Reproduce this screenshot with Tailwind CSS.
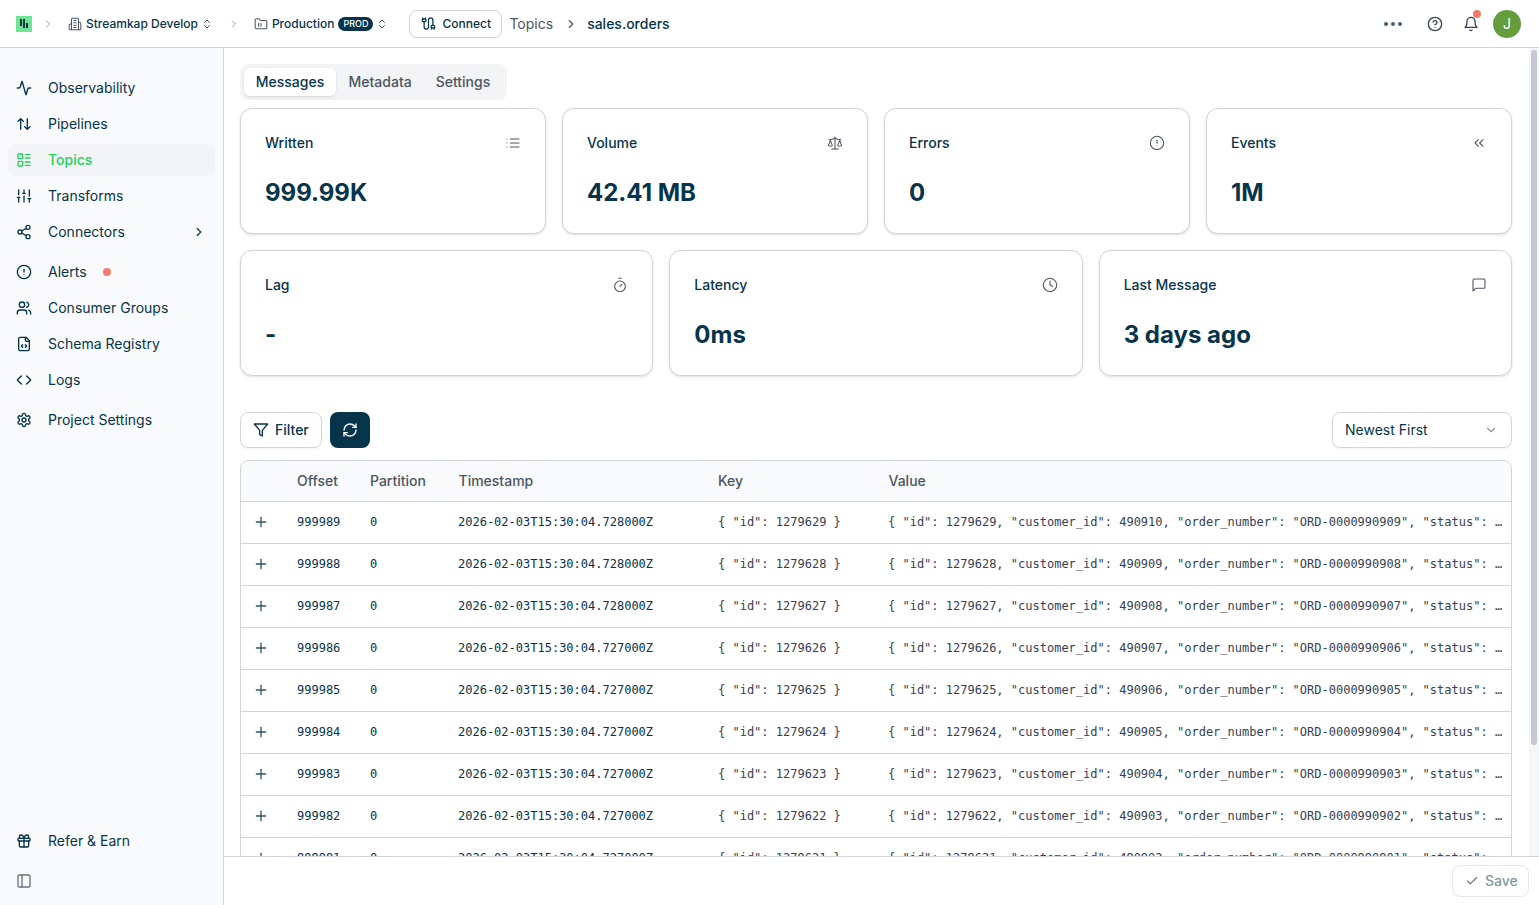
<!DOCTYPE html>
<html lang="en">
<head>
    <meta charset="UTF-8">
    <title>sales.orders</title>
    <script src="https://cdn.jsdelivr.net/npm/@tailwindcss/browser@4"></script>
</head>
<body class="h-[905px] w-[1539px] overflow-hidden bg-white font-['Inter',sans-serif] text-[#06344a]">
    <!-- Top bar -->
    <header class="flex h-[48px] items-center border-b border-[#d1d5db] pl-4 pr-[18px]">
        <div class="flex h-4 w-4 items-center justify-center gap-[1px] bg-[#6fe397]">
            <span class="h-[7px] w-[2px] -translate-y-[1px] bg-[#14343f]"></span>
            <span class="h-[9px] w-[2px] bg-[#14343f]"></span>
            <span class="h-[5px] w-[2px] translate-y-[2px] bg-[#14343f]"></span>
        </div>
        <svg class="ml-[10px] h-[12px] w-[12px] text-[#9ca3af]" viewBox="0 0 24 24" fill="none" stroke="currentColor" stroke-width="2" stroke-linecap="round" stroke-linejoin="round"><path d="m9 18 6-6-6-6"/></svg>
        <svg class="ml-[14px] h-[14px] w-[14px] text-[#4b5563]" viewBox="0 0 24 24" fill="none" stroke="currentColor" stroke-width="1.8" stroke-linecap="round" stroke-linejoin="round"><path d="M6 22V4a2 2 0 0 1 2-2h8a2 2 0 0 1 2 2v18Z"/><path d="M6 12H4a2 2 0 0 0-2 2v6a2 2 0 0 0 2 2h2"/><path d="M18 9h2a2 2 0 0 1 2 2v9a2 2 0 0 1-2 2h-2"/><path d="M10 6h4"/><path d="M10 10h4"/><path d="M10 14h4"/><path d="M10 18h4"/></svg>
        <span class="ml-1 text-xs font-medium">Streamkap Develop</span>
        <svg class="ml-[3px] h-3 w-3 text-[#4b5563]" viewBox="0 0 24 24" fill="none" stroke="currentColor" stroke-width="2" stroke-linecap="round" stroke-linejoin="round"><path d="m7 15 5 5 5-5"/><path d="m7 9 5-5 5 5"/></svg>
        <svg class="ml-[15px] h-[12px] w-[12px] text-[#9ca3af]" viewBox="0 0 24 24" fill="none" stroke="currentColor" stroke-width="2" stroke-linecap="round" stroke-linejoin="round"><path d="m9 18 6-6-6-6"/></svg>
        <svg class="ml-[14px] h-[14px] w-[14px] text-[#4b5563]" viewBox="0 0 24 24" fill="none" stroke="currentColor" stroke-width="1.8" stroke-linecap="round" stroke-linejoin="round"><path d="M20 20a2 2 0 0 0 2-2V8a2 2 0 0 0-2-2h-7.9a2 2 0 0 1-1.69-.9L9.6 3.9A2 2 0 0 0 7.93 3H4a2 2 0 0 0-2 2v13a2 2 0 0 0 2 2Z"/><path d="M8 11v5"/><path d="M12 11v5"/></svg>
        <span class="ml-1 text-xs font-medium">Production</span>
        <span class="ml-1 flex h-[14px] w-[35px] items-center justify-center rounded-full bg-[#06344a] text-[9px] font-medium text-white">PROD</span>
        <svg class="ml-[3px] h-3 w-3 text-[#4b5563]" viewBox="0 0 24 24" fill="none" stroke="currentColor" stroke-width="2" stroke-linecap="round" stroke-linejoin="round"><path d="m7 15 5 5 5-5"/><path d="m7 9 5-5 5 5"/></svg>
        <button class="ml-[21px] flex h-[28px] w-[93px] items-center gap-[6px] rounded-lg border border-[#d1d5db] pl-[11px] text-xs font-medium shadow-xs">
            <svg class="h-[15px] w-[15px]" viewBox="0 0 24 24" fill="none" stroke="currentColor" stroke-width="2" stroke-linecap="round" stroke-linejoin="round"><path d="M17 21v-2a1 1 0 0 1-1-1v-1a2 2 0 0 1 2-2h2a2 2 0 0 1 2 2v1a1 1 0 0 1-1 1"/><path d="M19 15V6.5a1 1 0 0 0-7 0v11a1 1 0 0 1-7 0V9"/><path d="M21 21v-2h-4"/><path d="M3 5h4V3"/><path d="M7 5a1 1 0 0 1 1 1v1a2 2 0 0 1-2 2H4a2 2 0 0 1-2-2V6a1 1 0 0 1 1-1V3"/></svg>
            Connect
        </button>
        <span class="ml-[7px] text-sm text-[#4b5563]">Topics</span>
        <svg class="ml-[11px] h-[14px] w-[14px] text-[#4b5563]" viewBox="0 0 24 24" fill="none" stroke="currentColor" stroke-width="2" stroke-linecap="round" stroke-linejoin="round"><path d="m9 18 6-6-6-6"/></svg>
        <span class="ml-[9px] text-sm font-medium">sales.orders</span>

        <div class="ml-auto flex items-center">
            <div class="flex gap-[3px]">
                <span class="h-[4px] w-[4px] rounded-full bg-[#3f6273]"></span>
                <span class="h-[4px] w-[4px] rounded-full bg-[#3f6273]"></span>
                <span class="h-[4px] w-[4px] rounded-full bg-[#3f6273]"></span>
            </div>
            <svg class="ml-[25px] h-4 w-4 text-[#374151]" viewBox="0 0 24 24" fill="none" stroke="currentColor" stroke-width="2" stroke-linecap="round" stroke-linejoin="round"><circle cx="12" cy="12" r="10"/><path d="M9.09 9a3 3 0 0 1 5.83 1c0 2-3 3-3 3"/><path d="M12 17h.01"/></svg>
            <div class="relative ml-[20px] h-4 w-4">
                <svg class="h-4 w-4 text-[#374151]" viewBox="0 0 24 24" fill="none" stroke="currentColor" stroke-width="2" stroke-linecap="round" stroke-linejoin="round"><path d="M6 8a6 6 0 0 1 12 0c0 7 3 9 3 9H3s3-2 3-9"/><path d="M10.3 21a1.94 1.94 0 0 0 3.4 0"/></svg>
                <span class="absolute -right-[2px] -top-[6px] h-2 w-2 rounded-full bg-[#ef7c6c]"></span>
            </div>
            <div class="ml-[14px] flex h-7 w-7 items-center justify-center rounded-full bg-[#659c3c] text-sm text-white">J</div>
        </div>
    </header>

    <div class="flex h-[857px]">
        <!-- Sidebar -->
        <aside class="flex w-[224px] shrink-0 flex-col border-r border-[#d1d5db] bg-[#f9fafb] px-2 pb-2 pt-6 text-sm">
            <nav class="flex flex-col gap-2">
                <div class="flex flex-col gap-1">
                    <a class="flex h-8 items-center gap-4 rounded-lg px-2">
                        <svg class="h-4 w-4" viewBox="0 0 24 24" fill="none" stroke="currentColor" stroke-width="2" stroke-linecap="round" stroke-linejoin="round"><path d="M22 12h-2.48a2 2 0 0 0-1.93 1.46l-2.35 8.36a.25.25 0 0 1-.48 0L9.24 2.18a.25.25 0 0 0-.48 0l-2.35 8.36A2 2 0 0 1 4.49 12H2"/></svg>
                        Observability
                    </a>
                    <a class="flex h-8 items-center gap-4 rounded-lg px-2">
                        <svg class="h-4 w-4" viewBox="0 0 24 24" fill="none" stroke="currentColor" stroke-width="2" stroke-linecap="round" stroke-linejoin="round"><path d="m3 8 4-4 4 4"/><path d="M7 4v16"/><path d="m21 16-4 4-4-4"/><path d="M17 20V4"/></svg>
                        Pipelines
                    </a>
                    <a class="flex h-8 items-center gap-4 rounded-lg bg-[#f3f4f6] px-2 font-medium text-[#1fd160]">
                        <svg class="h-4 w-4" viewBox="0 0 24 24" fill="none" stroke="currentColor" stroke-width="2" stroke-linecap="round" stroke-linejoin="round"><rect x="3" y="3" width="7" height="7" rx="1"/><rect x="3" y="14" width="7" height="7" rx="1"/><path d="M14 4h7"/><path d="M14 9h7"/><path d="M14 15h7"/><path d="M14 20h7"/></svg>
                        Topics
                    </a>
                    <a class="flex h-8 items-center gap-4 rounded-lg px-2">
                        <svg class="h-4 w-4" viewBox="0 0 24 24" fill="none" stroke="currentColor" stroke-width="2" stroke-linecap="round" stroke-linejoin="round"><path d="M4 21v-7"/><path d="M4 10V3"/><path d="M12 21v-9"/><path d="M12 8V3"/><path d="M20 21v-5"/><path d="M20 12V3"/><path d="M2 14h4"/><path d="M10 8h4"/><path d="M18 16h4"/></svg>
                        Transforms
                    </a>
                    <a class="flex h-8 items-center gap-4 rounded-lg pl-2 pr-[9px]">
                        <svg class="h-4 w-4" viewBox="0 0 24 24" fill="none" stroke="currentColor" stroke-width="2" stroke-linecap="round" stroke-linejoin="round"><circle cx="18" cy="5" r="3"/><circle cx="6" cy="12" r="3"/><circle cx="18" cy="19" r="3"/><path d="m8.59 13.51 6.83 3.98"/><path d="m15.41 6.51-6.82 3.98"/></svg>
                        Connectors
                        <svg class="ml-auto h-[14px] w-[14px]" viewBox="0 0 24 24" fill="none" stroke="currentColor" stroke-width="2" stroke-linecap="round" stroke-linejoin="round"><path d="m9 18 6-6-6-6"/></svg>
                    </a>
                </div>
                <div class="flex flex-col gap-1">
                    <a class="flex h-8 items-center gap-4 rounded-lg px-2">
                        <svg class="h-4 w-4" viewBox="0 0 24 24" fill="none" stroke="currentColor" stroke-width="2" stroke-linecap="round" stroke-linejoin="round"><circle cx="12" cy="12" r="10"/><path d="M12 8v4"/><path d="M12 16h.01"/></svg>
                        Alerts
                        <span class="h-2 w-2 rounded-full bg-[#ef7c6c]"></span>
                    </a>
                    <a class="flex h-8 items-center gap-4 rounded-lg px-2">
                        <svg class="h-4 w-4" viewBox="0 0 24 24" fill="none" stroke="currentColor" stroke-width="2" stroke-linecap="round" stroke-linejoin="round"><path d="M16 21v-2a4 4 0 0 0-4-4H6a4 4 0 0 0-4 4v2"/><circle cx="9" cy="7" r="4"/><path d="M22 21v-2a4 4 0 0 0-3-3.87"/><path d="M16 3.13a4 4 0 0 1 0 7.75"/></svg>
                        Consumer Groups
                    </a>
                    <a class="flex h-8 items-center gap-4 rounded-lg px-2">
                        <svg class="h-4 w-4" viewBox="0 0 24 24" fill="none" stroke="currentColor" stroke-width="2" stroke-linecap="round" stroke-linejoin="round"><path d="M15 2H6a2 2 0 0 0-2 2v16a2 2 0 0 0 2 2h12a2 2 0 0 0 2-2V7Z"/><path d="M14 2v4a2 2 0 0 0 2 2h4"/><path d="m10 13-2 2 2 2"/><path d="m14 17 2-2-2-2"/></svg>
                        Schema Registry
                    </a>
                    <a class="flex h-8 items-center gap-4 rounded-lg px-2">
                        <svg class="h-4 w-4" viewBox="0 0 24 24" fill="none" stroke="currentColor" stroke-width="2" stroke-linecap="round" stroke-linejoin="round"><path d="m16 18 6-6-6-6"/><path d="m8 6-6 6 6 6"/></svg>
                        Logs
                    </a>
                </div>
                <a class="flex h-8 items-center gap-4 rounded-lg px-2">
                    <svg class="h-4 w-4" viewBox="0 0 24 24" fill="none" stroke="currentColor" stroke-width="2" stroke-linecap="round" stroke-linejoin="round"><path d="M12.22 2h-.44a2 2 0 0 0-2 2v.18a2 2 0 0 1-1 1.73l-.43.25a2 2 0 0 1-2 0l-.15-.08a2 2 0 0 0-2.73.73l-.22.38a2 2 0 0 0 .73 2.73l.15.1a2 2 0 0 1 1 1.72v.51a2 2 0 0 1-1 1.74l-.15.09a2 2 0 0 0-.73 2.73l.22.38a2 2 0 0 0 2.73.73l.15-.08a2 2 0 0 1 2 0l.43.25a2 2 0 0 1 1 1.73V20a2 2 0 0 0 2 2h.44a2 2 0 0 0 2-2v-.18a2 2 0 0 1 1-1.73l.43-.25a2 2 0 0 1 2 0l.15.08a2 2 0 0 0 2.73-.73l.22-.39a2 2 0 0 0-.73-2.73l-.15-.08a2 2 0 0 1-1-1.74v-.5a2 2 0 0 1 1-1.74l.15-.09a2 2 0 0 0 .73-2.73l-.22-.38a2 2 0 0 0-2.73-.73l-.15.08a2 2 0 0 1-2 0l-.43-.25a2 2 0 0 1-1-1.73V4a2 2 0 0 0-2-2z"/><circle cx="12" cy="12" r="3"/></svg>
                    Project Settings
                </a>
            </nav>
            <div class="mt-auto flex flex-col gap-[8px]">
                <a class="flex h-8 items-center gap-4 rounded-lg px-2">
                    <svg class="h-4 w-4" viewBox="0 0 24 24" fill="none" stroke="currentColor" stroke-width="2" stroke-linecap="round" stroke-linejoin="round"><rect x="3" y="8" width="18" height="4" rx="1"/><path d="M12 8v13"/><path d="M19 12v7a2 2 0 0 1-2 2H7a2 2 0 0 1-2-2v-7"/><path d="M7.5 8a2.5 2.5 0 0 1 0-5A4.8 8 0 0 1 12 8a4.8 8 0 0 1 4.5-5 2.5 2.5 0 0 1 0 5"/></svg>
                    Refer &amp; Earn
                </a>
                <a class="flex h-8 items-center px-2 text-[#6b7280]">
                    <svg class="h-4 w-4" viewBox="0 0 24 24" fill="none" stroke="currentColor" stroke-width="2" stroke-linecap="round" stroke-linejoin="round"><rect x="3" y="3" width="18" height="18" rx="2"/><path d="M9 3v18"/></svg>
                </a>
            </div>
        </aside>

        <!-- Main -->
        <main class="flex min-w-0 flex-1 flex-col">
            <div class="flex h-[809px] border-b border-[#d1d5db]">
                <div class="min-w-0 flex-1 overflow-hidden pl-4 pr-[17px] pt-4">
                    <div class="flex h-9 w-[267px] items-center rounded-lg bg-[#f3f4f6] p-1 text-sm font-medium text-[#4b5563]">
                        <span class="flex h-7 w-[92px] items-center justify-center rounded-md bg-white text-[#06344a] shadow-sm">Messages</span>
                        <span class="ml-[12.5px]">Metadata</span>
                        <span class="ml-6">Settings</span>
                    </div>

                    <div class="mt-2 grid grid-cols-4 gap-4">
                        <div class="h-[126px] rounded-xl border border-[#d1d5db] bg-white p-6 shadow-sm">
                            <div class="flex items-center justify-between text-sm font-medium">
                                Written
                                <svg class="h-4 w-4 text-[#4b5563]" viewBox="0 0 24 24" fill="none" stroke="currentColor" stroke-width="1.6" stroke-linecap="round" stroke-linejoin="round"><path d="M3 12h.01"/><path d="M3 18h.01"/><path d="M3 6h.01"/><path d="M8 12h13"/><path d="M8 18h13"/><path d="M8 6h13"/></svg>
                            </div>
                            <div class="mt-6 text-2xl font-bold">999.99K</div>
                        </div>
                        <div class="h-[126px] rounded-xl border border-[#d1d5db] bg-white p-6 shadow-sm">
                            <div class="flex items-center justify-between text-sm font-medium">
                                Volume
                                <svg class="h-4 w-4 text-[#4b5563]" viewBox="0 0 24 24" fill="none" stroke="currentColor" stroke-width="1.6" stroke-linecap="round" stroke-linejoin="round"><path d="m16 16 3-8 3 8c-.87.65-1.92 1-3 1s-2.13-.35-3-1Z"/><path d="m2 16 3-8 3 8c-.87.65-1.92 1-3 1s-2.13-.35-3-1Z"/><path d="M7 21h10"/><path d="M12 3v18"/><path d="M3 7h2c2 0 5-1 7-2 2 1 5 2 7 2h2"/></svg>
                            </div>
                            <div class="mt-6 text-2xl font-bold">42.41 MB</div>
                        </div>
                        <div class="h-[126px] rounded-xl border border-[#d1d5db] bg-white p-6 shadow-sm">
                            <div class="flex items-center justify-between text-sm font-medium">
                                Errors
                                <svg class="h-4 w-4 text-[#4b5563]" viewBox="0 0 24 24" fill="none" stroke="currentColor" stroke-width="1.6" stroke-linecap="round" stroke-linejoin="round"><circle cx="12" cy="12" r="10"/><path d="M12 8v4"/><path d="M12 16h.01"/></svg>
                            </div>
                            <div class="mt-6 text-2xl font-bold">0</div>
                        </div>
                        <div class="h-[126px] rounded-xl border border-[#d1d5db] bg-white p-6 shadow-sm">
                            <div class="flex items-center justify-between text-sm font-medium">
                                Events
                                <svg class="h-4 w-4 text-[#4b5563]" viewBox="0 0 24 24" fill="none" stroke="currentColor" stroke-width="1.6" stroke-linecap="round" stroke-linejoin="round"><path d="m11 17-5-5 5-5"/><path d="m18 17-5-5 5-5"/></svg>
                            </div>
                            <div class="mt-6 text-2xl font-bold">1M</div>
                        </div>
                    </div>

                    <div class="mt-4 grid grid-cols-3 gap-4">
                        <div class="h-[126px] rounded-xl border border-[#d1d5db] bg-white p-6 shadow-sm">
                            <div class="flex items-center justify-between text-sm font-medium">
                                Lag
                                <svg class="h-4 w-4 text-[#4b5563]" viewBox="0 0 24 24" fill="none" stroke="currentColor" stroke-width="1.6" stroke-linecap="round" stroke-linejoin="round"><path d="M10 2h4"/><path d="m12 14 3-3"/><circle cx="12" cy="14" r="8"/></svg>
                            </div>
                            <div class="mt-6 text-2xl font-bold">-</div>
                        </div>
                        <div class="h-[126px] rounded-xl border border-[#d1d5db] bg-white p-6 shadow-sm">
                            <div class="flex items-center justify-between text-sm font-medium">
                                Latency
                                <svg class="h-4 w-4 text-[#4b5563]" viewBox="0 0 24 24" fill="none" stroke="currentColor" stroke-width="1.6" stroke-linecap="round" stroke-linejoin="round"><circle cx="12" cy="12" r="10"/><path d="M12 6v6l4 2"/></svg>
                            </div>
                            <div class="mt-6 text-2xl font-bold">0ms</div>
                        </div>
                        <div class="h-[126px] rounded-xl border border-[#d1d5db] bg-white p-6 shadow-sm">
                            <div class="flex items-center justify-between text-sm font-medium">
                                Last Message
                                <svg class="h-4 w-4 text-[#4b5563]" viewBox="0 0 24 24" fill="none" stroke="currentColor" stroke-width="1.6" stroke-linecap="round" stroke-linejoin="round"><path d="M21 15a2 2 0 0 1-2 2H7l-4 4V5a2 2 0 0 1 2-2h14a2 2 0 0 1 2 2z"/></svg>
                            </div>
                            <div class="mt-6 text-2xl font-bold">3 days ago</div>
                        </div>
                    </div>

                    <!-- Toolbar -->
                    <div class="mt-9 flex items-center">
                        <button class="flex h-9 w-[82px] items-center gap-[6px] rounded-lg border border-[#d1d5db] pl-3 text-sm font-medium shadow-xs">
                            <svg class="h-4 w-4" viewBox="0 0 24 24" fill="none" stroke="currentColor" stroke-width="2" stroke-linecap="round" stroke-linejoin="round"><path d="M22 3H2l8 9.46V19l4 2v-8.54L22 3z"/></svg>
                            Filter
                        </button>
                        <button class="ml-2 flex h-9 w-10 items-center justify-center rounded-lg bg-[#06344a] text-white">
                            <svg class="h-4 w-4" viewBox="0 0 24 24" fill="none" stroke="currentColor" stroke-width="2" stroke-linecap="round" stroke-linejoin="round"><path d="M3 12a9 9 0 0 1 9-9 9.75 9.75 0 0 1 6.74 2.74L21 8"/><path d="M21 3v5h-5"/><path d="M21 12a9 9 0 0 1-9 9 9.75 9.75 0 0 1-6.74-2.74L3 16"/><path d="M8 16H3v5"/></svg>
                        </button>
                        <div class="ml-auto flex h-9 w-[180px] items-center justify-between rounded-lg border border-[#d1d5db] pl-3 pr-[13px] text-sm shadow-xs">
                            Newest First
                            <svg class="h-[14px] w-[14px] text-[#8a96a3]" viewBox="0 0 24 24" fill="none" stroke="currentColor" stroke-width="2" stroke-linecap="round" stroke-linejoin="round"><path d="m6 9 6 6 6-6"/></svg>
                        </div>
                    </div>

                    <!-- Messages table -->
                    <div class="mt-3 rounded-t-lg border border-[#d1d5db]">
                        <table class="w-full table-fixed border-collapse">
                            <colgroup>
                                <col class="w-[44px]"><col class="w-[73px]"><col class="w-[88.5px]"><col class="w-[259.5px]"><col class="w-[170.5px]"><col>
                            </colgroup>
                            <thead>
                                <tr class="h-[40px] rounded-t-lg bg-[#f9fafb] text-left text-sm font-medium text-[#4b5563]">
                                    <th class="rounded-tl-lg"></th>
                                    <th class="px-3 font-medium">Offset</th>
                                    <th class="px-3 font-medium">Partition</th>
                                    <th class="px-3 font-medium">Timestamp</th>
                                    <th class="px-3 font-medium">Key</th>
                                    <th class="rounded-tr-lg px-3 font-medium">Value</th>
                                </tr>
                            </thead>
                            <tbody id="rows" class="font-['DejaVu_Sans_Mono',monospace] text-xs"></tbody>
                        </table>
                    </div>
                </div>
                <!-- Scrollbar -->
                <div class="w-[10px] shrink-0 bg-[#f5f6f8] pl-[2px] pr-[2px] pt-[2px]">
                    <div class="h-[695px] rounded-full bg-[#c4c9d4]"></div>
                </div>
            </div>

            <!-- Footer -->
            <div class="flex h-[48px] items-center justify-end pr-[10px]">
                <button class="flex h-8 w-[77px] items-center gap-[6px] rounded-lg border border-[#e5e7eb] pl-[12px] text-sm font-medium text-[#82999f]">
                    <svg class="h-[14px] w-[14px] text-[#6b7280]" viewBox="0 0 24 24" fill="none" stroke="currentColor" stroke-width="2" stroke-linecap="round" stroke-linejoin="round"><path d="M20 6 9 17l-5-5"/></svg>
                    Save
                </button>
            </div>
        </main>
    </div>

    <script>
        // Rows of the messages table
        const messages = [
            [999989, '2026-02-03T15:30:04.728000Z', 1279629, 490910, '0000990909'],
            [999988, '2026-02-03T15:30:04.728000Z', 1279628, 490909, '0000990908'],
            [999987, '2026-02-03T15:30:04.728000Z', 1279627, 490908, '0000990907'],
            [999986, '2026-02-03T15:30:04.727000Z', 1279626, 490907, '0000990906'],
            [999985, '2026-02-03T15:30:04.727000Z', 1279625, 490906, '0000990905'],
            [999984, '2026-02-03T15:30:04.727000Z', 1279624, 490905, '0000990904'],
            [999983, '2026-02-03T15:30:04.727000Z', 1279623, 490904, '0000990903'],
            [999982, '2026-02-03T15:30:04.727000Z', 1279622, 490903, '0000990902'],
            [999981, '2026-02-03T15:30:04.727000Z', 1279621, 490902, '0000990901'],
        ];

        document.getElementById('rows').innerHTML = messages.map(([offset, time, id, customer, order]) => `
            <tr class="h-[42px] border-t border-[#d1d5db]">
                <td class="pl-3">
                    <svg class="h-4 w-4 text-[#2f5567]" viewBox="0 0 24 24" fill="none" stroke="currentColor" stroke-width="2" stroke-linecap="round" stroke-linejoin="round"><path d="M5 12h14"/><path d="M12 5v14"/></svg>
                </td>
                <td class="px-3">${offset}</td>
                <td class="px-3">0</td>
                <td class="pl-[11.5px] pr-3">${time}</td>
                <td class="px-3 text-[#374151]">{ "id": ${id} }</td>
                <td class="truncate pl-[11.5px] pr-2 text-[#374151]">{ "id": ${id}, "customer_id": ${customer}, "order_number": "ORD-${order}", "status": "pending", "total": 120.50 }</td>
            </tr>`).join('');
    </script>
</body>
</html>
